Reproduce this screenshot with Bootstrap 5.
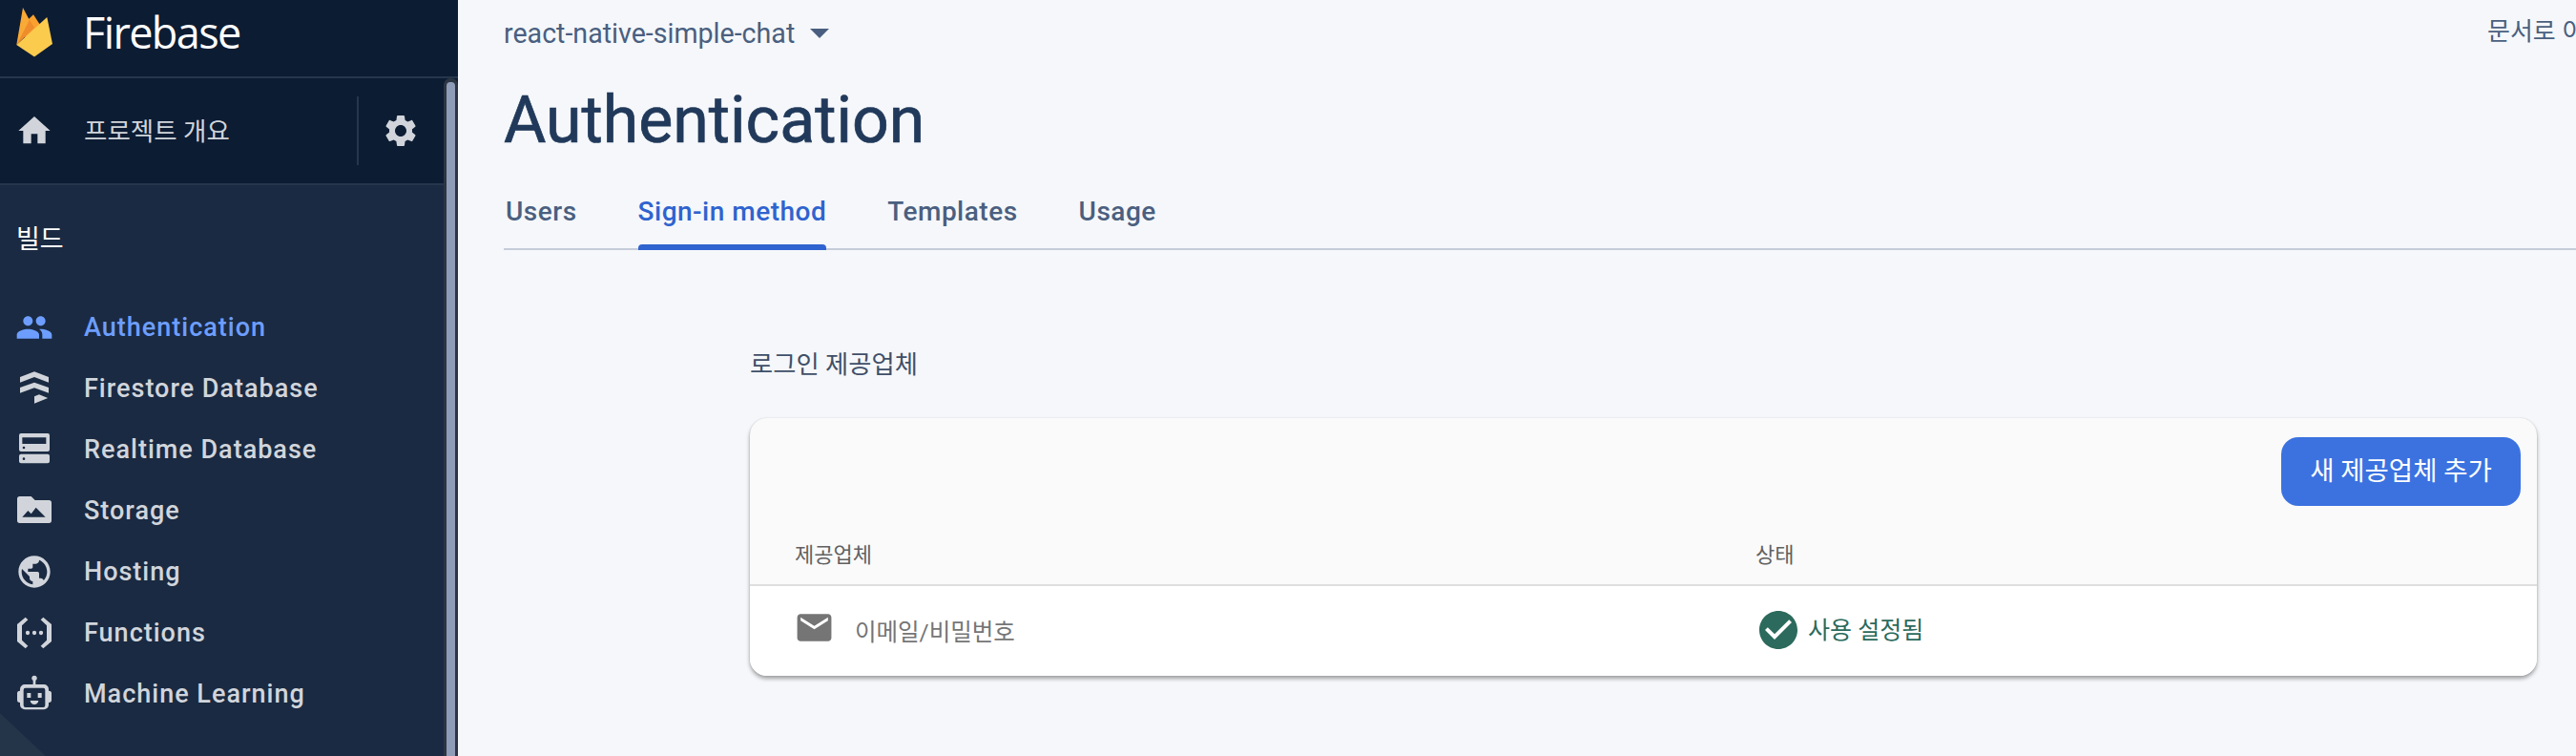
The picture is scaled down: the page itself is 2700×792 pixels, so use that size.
<!DOCTYPE html>
<html lang="ko">
<head>
  <meta charset="UTF-8" />
  <title>Authentication - Firebase</title>
  <link href="https://cdn.jsdelivr.net/npm/bootstrap@5.3.0/dist/css/bootstrap.min.css" rel="stylesheet">
  <style>
    html, body { height: 792px; overflow: hidden; }
    body {
      background: #f5f7fa;
      font-family: Roboto, "Noto Sans CJK KR", sans-serif;
      color: #4a5f80;
    }

    /* sidebar */
    .side-bar { width: 480px; height: 792px; background: #1a2a42; position: relative; overflow: hidden; flex-shrink: 0; }
    .side-logo { height: 82px; background: #0c1c33; border-bottom: 2px solid #26364c; padding-left: 17px; }
    .side-logo svg { margin-top: -12px; }
    .side-logo span { margin-left: 32px; margin-top: -14px; font-size: 45px; color: #fff; font-family: "Open Sans", Roboto, sans-serif; letter-spacing: -1.6px; line-height: 1; }
    .side-project { height: 112px; background: #0c1c33; border-bottom: 2px solid #26364c; padding-left: 16px; color: #d1d5db; }
    .side-project .proj-name { margin-left: 32px; width: 286px; font-size: 26.5px; padding-top: 2px; }
    .proj-sep { width: 2px; height: 72px; background: #26364c; }
    .proj-gear { margin-left: 24px; }
    .side-title { color: #fff; font-size: 27px; padding: 38px 0 0 17px; height: 117px; line-height: 38px; }
    .side-item { height: 64px; padding-left: 16px; font-size: 27px; font-weight: 500; letter-spacing: 1px; color: #d1d5db; background: transparent; border: 0; border-radius: 0; }
    .side-item svg { margin-right: 32px; fill: #d1d5db; flex-shrink: 0; }
    .side-item.is-active { color: #6d9eff; background: transparent; }
    .side-item.is-active svg { fill: #6d9eff; }
    .scroll-track { position: absolute; left: 465px; top: 82px; bottom: 0; width: 15px; background: #2c3542; border-radius: 7px 7px 0 0; }
    .scroll-thumb { position: absolute; left: 3px; right: 3px; top: 4px; bottom: 0; background: #8f9cb8; border-radius: 4px 4px 0 0; }
    .side-corner { position: absolute; left: 0; bottom: 0; width: 48px; height: 45px; background: #243449; clip-path: polygon(0 0, 100% 100%, 0 100%); }

    /* main */
    .main-area { min-width: 0; overflow: hidden; white-space: nowrap; }
    .top-line { height: 70px; padding-left: 48px; font-size: 28.6px; }
    .top-line svg { margin-left: 16px; }
    .doc-link { margin-right: -52px; width: 145px; overflow: hidden; margin-top: -4px; font-size: 26px; }
    .page-title { margin: 0 0 0 48px; height: 112px; font-size: 68px; font-weight: 400; -webkit-text-stroke: .7px #21395a; line-height: 113px; color: #21395a; }
    .tab-bar { margin-left: 48px; height: 80px; border-bottom: 2px solid #c5cdd9; gap: 64px; padding-left: 2px; }
    .tab-bar a { position: relative; height: 78px; line-height: 80px; padding: 0; font-size: 28px; font-weight: 500; letter-spacing: .5px; color: #4a5f80; }
    .tab-bar a.is-on { color: #2f63cf; }
    .tab-bar a.is-on::after { content: ""; position: absolute; left: 0; right: 0; bottom: -2px; height: 6px; background: #2f63cf; border-radius: 4px 4px 0 0; }

    .provider-label { margin: 100px 0 0 306px; height: 76px; font-size: 26.3px; line-height: 40px; color: #3f4f68; }
    .provider-card { margin-left: 306px; width: 1873px; border: 0; border-radius: 18px; overflow: hidden; background: #fafafa; box-shadow: 0 3px 4px rgba(0,0,0,.35), 0 0 2px rgba(0,0,0,.12); }
    .card-tools { height: 112px; padding: 20px 17px 0 0; }
    .add-btn { width: 251px; height: 72px; padding: 0; border: 0; border-radius: 18px; background: #3b72e0; font-size: 27.5px; color: #fff; }
    .provider-table { margin: 0; table-layout: fixed; }
    .provider-table th { height: 63px; padding: 0 0 0 47px; background: #fafafa; border-bottom: 2px solid #dedede; font-weight: 400; font-size: 22px; color: #616161; vertical-align: middle; }
    .provider-table td { height: 95px; padding: 0 0 0 47px; background: #fff; border: 0; vertical-align: middle; }
    .mail-cell { font-size: 24.5px; color: #757575; padding-top: 4px !important; }
    .mail-cell svg { position: relative; top: 3px; margin: -20px 21px 0 -1px; fill: #757575; }
    .state-cell { font-size: 25px; color: #2b6a5c; padding-top: 2px !important; }
    .state-cell svg { position: relative; top: 1px; margin: -6px 7px 0 0; fill: #2b6a5c; }
  </style>
</head>
<body class="d-flex">
  <aside class="side-bar">
    <div class="side-logo d-flex align-items-center">
      <svg width="38" height="52" viewBox="17 6 38 52">
        <polygon points="17.3,45 24,6 34,25" fill="#f9a935"/>
        <polygon points="30,18 35,13.3 42,24 26,38" fill="#f9a12e"/>
        <polygon points="17.3,45 31,19 36,27" fill="#ef8c2b"/>
        <polygon points="17.3,45 49.3,16 55,44 36,57.5" fill="#fbcb4e"/>
      </svg>
      <span>Firebase</span>
    </div>
    <div class="side-project d-flex align-items-center">
      <svg width="40" height="40" viewBox="0 0 24 24" fill="#d1d5db"><path d="M10 20v-6h4v6h5v-8h3L12 3 2 12h3v8z"/></svg>
      <div class="proj-name">프로젝트 개요</div>
      <div class="proj-sep"></div>
      <svg class="proj-gear" width="40" height="40" viewBox="0 0 24 24" fill="#d1d5db"><path d="M19.14 12.94c.04-.3.06-.61.06-.94 0-.32-.02-.64-.07-.94l2.03-1.58c.18-.14.23-.41.12-.61l-1.92-3.32c-.12-.22-.37-.29-.59-.22l-2.39.96c-.5-.38-1.03-.7-1.62-.94l-.36-2.54c-.04-.24-.24-.41-.48-.41h-3.84c-.24 0-.43.17-.47.41l-.36 2.54c-.59.24-1.13.57-1.62.94l-2.39-.96c-.22-.08-.47 0-.59.22L2.74 8.87c-.12.21-.08.47.12.61l2.03 1.58c-.05.3-.09.63-.09.94s.02.64.07.94l-2.03 1.58c-.18.14-.23.41-.12.61l1.92 3.32c.12.22.37.29.59.22l2.39-.96c.5.38 1.03.7 1.62.94l.36 2.54c.05.24.24.41.48.41h3.84c.24 0 .44-.17.47-.41l.36-2.54c.59-.24 1.13-.56 1.62-.94l2.39.96c.22.08.47 0 .59-.22l1.92-3.32c.12-.22.07-.47-.12-.61l-2.01-1.58zM12 15.6c-1.98 0-3.6-1.62-3.6-3.6s1.62-3.6 3.6-3.6 3.6 1.62 3.6 3.6-1.62 3.6-3.6 3.6z"/></svg>
    </div>
    <div class="side-title">빌드</div>
    <div class="list-group list-group-flush">
      <div class="list-group-item side-item is-active d-flex align-items-center">
        <svg width="40" height="40" viewBox="0 0 24 24"><path d="M16 11c1.66 0 2.99-1.34 2.99-3S17.66 5 16 5c-1.66 0-3 1.34-3 3s1.34 3 3 3zm-8 0c1.66 0 2.99-1.34 2.99-3S9.66 5 8 5C6.34 5 5 6.34 5 8s1.34 3 3 3zm0 2c-2.33 0-7 1.17-7 3.5V19h14v-2.5c0-2.33-4.67-3.5-7-3.5zm8 0c-.29 0-.62.02-.97.05 1.16.84 1.97 1.97 1.97 3.45V19h6v-2.5c0-2.33-4.67-3.5-7-3.5z"/></svg>
        Authentication
      </div>
      <div class="list-group-item side-item d-flex align-items-center">
        <svg width="40" height="40" viewBox="0 0 24 24"><polygon points="3,4.8 12,1.4 21,4.8 21,8.2 12,4.8 3,8.2"/><polygon points="3,11.4 12,8.2 21,11.4 21,14.8 12,11.6 3,14.8"/><polygon points="12,17 15,15.8 20.5,18 12,21.5"/></svg>
        Firestore Database
      </div>
      <div class="list-group-item side-item d-flex align-items-center">
        <svg width="40" height="40" viewBox="0 0 24 24"><path fill-rule="evenodd" d="M3.6 1.8h16.8a1.2 1.2 0 0 1 1.2 1.2v9a1.2 1.2 0 0 1-1.2 1.2H3.6A1.2 1.2 0 0 1 2.4 12V3a1.2 1.2 0 0 1 1.2-1.2zM4.4 4.4v4h15v-4zM5.4 10a.8.8 0 1 0 0 1.6.8.8 0 0 0 0-1.6z"/><path fill-rule="evenodd" d="M3.6 14.8h16.8a1.2 1.2 0 0 1 1.2 1.2v3.4a1.2 1.2 0 0 1-1.2 1.2H3.6a1.2 1.2 0 0 1-1.2-1.2V16a1.2 1.2 0 0 1 1.2-1.2zM5.4 17a.8.8 0 1 0 0 1.6.8.8 0 0 0 0-1.6z"/></svg>
        Realtime Database
      </div>
      <div class="list-group-item side-item d-flex align-items-center">
        <svg width="40" height="40" viewBox="0 0 24 24"><path fill-rule="evenodd" d="M10 3H2.8A1.6 1.6 0 0 0 1.2 4.6v13.6a1.6 1.6 0 0 0 1.6 1.6h18.4a1.6 1.6 0 0 0 1.6-1.6V7a1.6 1.6 0 0 0-1.6-1.6H12.4zM4.4 16 8 12l2 2 3-4 6 6z"/></svg>
        Storage
      </div>
      <div class="list-group-item side-item d-flex align-items-center">
        <svg width="40" height="40" viewBox="0 0 24 24"><path d="M12 2C6.48 2 2 6.48 2 12s4.48 10 10 10 10-4.48 10-10S17.52 2 12 2zm-1 17.93c-3.95-.49-7-3.85-7-7.93 0-.62.08-1.21.21-1.79L9 15v1c0 1.1.9 2 2 2v1.93zm6.9-2.54c-.26-.81-1-1.39-1.9-1.39h-1v-3c0-.55-.45-1-1-1H8v-2h2c.55 0 1-.45 1-1V7h2c1.1 0 2-.9 2-2v-.41c2.93 1.19 5 4.06 5 7.41 0 2.08-.8 3.97-2.1 5.39z"/></svg>
        Hosting
      </div>
      <div class="list-group-item side-item d-flex align-items-center">
        <svg width="40" height="40" viewBox="0 0 24 24"><path d="M6.4 2.2 8 3.8 4.2 7.4v9.2L8 20.2l-1.6 1.6-5.2-4.4V6.6zM17.6 2.2 16 3.8l3.8 3.6v9.2L16 20.2l1.6 1.6 5.2-4.4V6.6z"/><circle cx="7.8" cy="12" r="1.3"/><circle cx="12" cy="12" r="1.3"/><circle cx="16.2" cy="12" r="1.3"/></svg>
        Functions
      </div>
      <div class="list-group-item side-item d-flex align-items-center">
        <svg width="40" height="40" viewBox="0 0 24 24"><path fill-rule="evenodd" d="M12 .4a1.7 1.7 0 0 1 .8 3.2V6H18a3 3 0 0 1 3 3v1h.2a1.6 1.6 0 0 1 1.6 1.6v4.2a1.6 1.6 0 0 1-1.6 1.6H21v1.4a3 3 0 0 1-3 3H6a3 3 0 0 1-3-3v-1.4h-.2a1.6 1.6 0 0 1-1.6-1.6v-4.2A1.6 1.6 0 0 1 2.8 10H3V9a3 3 0 0 1 3-3h5.2V3.6A1.7 1.7 0 0 1 12 .4zM6.4 8.2A1.2 1.2 0 0 0 5.2 9.4v9.8a1.2 1.2 0 0 0 1.2 1.2h11.2a1.2 1.2 0 0 0 1.2-1.2V9.4a1.2 1.2 0 0 0-1.2-1.2zM7.4 11.4h2.4v3H7.4zM14.2 11.4h2.4v3h-2.4zM9.4 16.2h5.2c0 1.4-1.2 2.4-2.6 2.4s-2.6-1-2.6-2.4z"/></svg>
        Machine Learning
      </div>
    </div>
    <div class="side-corner"></div>
    <div class="scroll-track"><div class="scroll-thumb"></div></div>
  </aside>

  <main class="main-area flex-grow-1">
    <div class="top-line d-flex align-items-center justify-content-between">
      <div class="d-flex align-items-center">react-native-simple-chat
        <svg width="20" height="12" viewBox="0 0 20 12" fill="#4a5f80"><polygon points="0,1 20,1 10,11"/></svg>
      </div>
      <div class="doc-link">문서로 이동</div>
    </div>
    <h1 class="page-title">Authentication</h1>
    <nav class="nav tab-bar">
      <a class="nav-link" href="#">Users</a>
      <a class="nav-link is-on" href="#">Sign-in method</a>
      <a class="nav-link" href="#">Templates</a>
      <a class="nav-link" href="#">Usage</a>
    </nav>
    <div class="provider-label">로그인 제공업체</div>
    <div class="card provider-card">
      <div class="card-tools d-flex justify-content-end align-items-start">
        <button class="btn btn-primary add-btn">새 제공업체 추가</button>
      </div>
      <table class="table provider-table">
        <colgroup><col style="width: 1007px"><col></colgroup>
        <thead>
          <tr><th>제공업체</th><th>상태</th></tr>
        </thead>
        <tbody>
          <tr>
            <td class="mail-cell">
              <svg width="43" height="43" viewBox="0 0 24 24"><path d="M20 4H4c-1.1 0-1.99.9-1.99 2L2 18c0 1.1.9 2 2 2h16c1.1 0 2-.9 2-2V6c0-1.1-.9-2-2-2zm0 4l-8 5-8-5V6l8 5 8-5v2z"/></svg>이메일/비밀번호
            </td>
            <td class="state-cell">
              <svg width="48" height="48" viewBox="0 0 24 24"><path d="M12 2C6.48 2 2 6.48 2 12s4.48 10 10 10 10-4.48 10-10S17.52 2 12 2zm-2 15l-5-5 1.41-1.41L10 14.17l7.59-7.59L19 8l-9 9z"/></svg>사용 설정됨
            </td>
          </tr>
        </tbody>
      </table>
    </div>
  </main>

  <script src="https://cdn.jsdelivr.net/npm/bootstrap@5.3.0/dist/js/bootstrap.bundle.min.js"></script>
</body>
</html>
